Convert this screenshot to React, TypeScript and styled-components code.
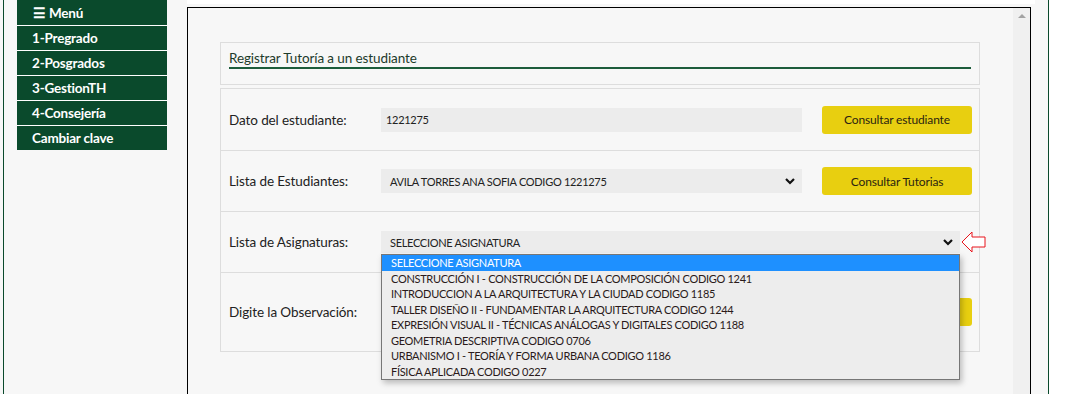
import React from "react";
import styled, { createGlobalStyle } from "styled-components";

const GlobalStyle = createGlobalStyle`
  html, body { margin: 0; padding: 0; background: #ffffff; }
  body { font-family: Lato, "Open Sans", sans-serif; color: #222; }
  * { box-sizing: border-box; }
`;

const Frame = styled.div`
  display: flex;
  width: 1049px;
  height: 394px;
  padding-left: 3px;
  background: #f7f7f7;
  overflow: hidden;
`;

const Shell = styled.div`
  flex: 1;
  display: flex;
  align-items: flex-start;
  gap: 20px;
  padding: 0 13px;
  border-left: 1px solid #0a4a2c;
  border-right: 1px solid #0a4a2c;
`;

const Sidebar = styled.nav`
  width: 150px;
  display: flex;
  flex-direction: column;
  background: #ffffff;
  gap: 1px;
`;

const MenuItem = styled.div<{ $first?: boolean }>`
  height: ${(p) => (p.$first ? 25 : 24)}px;
  display: flex;
  align-items: center;
  padding-left: ${(p) => (p.$first ? 16 : 15)}px;
  background: #0a4a2c;
  color: #ffffff;
  font-weight: 700;
  font-size: 13.5px;
  letter-spacing: -0.2px;
`;

const Main = styled.div`
  width: 848px;
  display: flex;
  flex-direction: column;
  gap: 3px;
`;

const TopStrip = styled.div`
  height: 4px;
  background: #ffffff;
`;

const Window = styled.div`
  width: 844px;
  height: 400px;
  border: 1px solid #000;
  display: flex;
  background: #f7f7f7;
`;

const Content = styled.div`
  flex: 1;
  padding: 34px 0 0 32px;
`;

const Scrollbar = styled.div`
  width: 17px;
  background: #f0f0f0;
  display: flex;
  justify-content: center;
  padding-top: 6px;
`;

const ScrollArrow = styled.div`
  width: 0;
  height: 0;
  border-left: 4px solid transparent;
  border-right: 4px solid transparent;
  border-bottom: 4px solid #a3a3a3;
`;

const HeaderBox = styled.div`
  width: 760px;
  height: 43px;
  border: 1px solid #dddddd;
  padding: 0 8px;
  display: flex;
  flex-direction: column;
  justify-content: flex-end;
`;

const Title = styled.div`
  font-size: 13.5px;
  color: #1d3b2b;
  line-height: 16px;
  padding-bottom: 1px;
  margin-bottom: 15px;
  border-bottom: 2px solid #1d5c3b;
  letter-spacing: -0.1px;
`;

const FormBox = styled.div`
  position: relative;
  width: 760px;
  margin-top: 3px;
  border: 1px solid #dddddd;
`;

const Row = styled.div<{ $h: number }>`
  display: grid;
  grid-template-columns: 132px 421px 150px;
  column-gap: 20px;
  align-items: center;
  height: ${(p) => p.$h}px;
  padding-left: 8px;
  border-top: 1px solid #dddddd;
  &:first-child { border-top: none; }
`;

const WideRow = styled(Row)`
  grid-template-columns: 152px 579px 30px;
  column-gap: 0;
`;

const Label = styled.div`
  font-size: 13.5px;
  color: #222;
  letter-spacing: -0.1px;
`;

const Field = styled.div<{ $h?: number; $pad?: number }>`
  height: ${(p) => p.$h ?? 24}px;
  background: #ececec;
  display: flex;
  align-items: center;
  justify-content: space-between;
  padding: 0 6px 0 ${(p) => p.$pad ?? 9}px;
  font-size: 11px;
  color: #222;
  letter-spacing: -0.3px;
`;

const Button = styled.div`
  height: 28px;
  background: #e8cf10;
  border-radius: 3px;
  display: flex;
  align-items: center;
  justify-content: center;
  font-size: 12px;
  color: #2b2410;
  letter-spacing: -0.15px;
`;

const Dropdown = styled.div`
  position: absolute;
  left: 160px;
  top: 165px;
  width: 579px;
  border: 1px solid #767676;
  background: #ededed;
  box-shadow: 2px 3px 6px rgba(0, 0, 0, 0.25);
`;

const Option = styled.div<{ $active?: boolean }>`
  height: 15.5px;
  line-height: 15.5px;
  padding-left: 9px;
  font-size: 11px;
  letter-spacing: -0.3px;
  white-space: nowrap;
  background: ${(p) => (p.$active ? "#1e90ff" : "transparent")};
  color: ${(p) => (p.$active ? "#ffffff" : "#2a1a1a")};
`;

const Chevron = () => (
  <svg width="12" height="8" viewBox="0 0 12 8">
    <path d="M2 2 L6 6 L10 2" fill="none" stroke="#111" strokeWidth="2.2" />
  </svg>
);

const RedArrow = () => (
  <svg width="26" height="22" viewBox="0 0 26 22" style={{ marginLeft: 1 }}>
    <path
      d="M1 11 L11 1 L11 6 L24 6 L24 16 L11 16 L11 21 Z"
      fill="#ffffff"
      stroke="#e8141c"
      strokeWidth="1"
      strokeLinejoin="miter"
    />
  </svg>
);

const options = [
  "SELECCIONE ASIGNATURA",
  "CONSTRUCCIÓN I - CONSTRUCCIÓN DE LA COMPOSICIÓN CODIGO 1241",
  "INTRODUCCION A LA ARQUITECTURA Y LA CIUDAD CODIGO 1185",
  "TALLER DISEÑO II - FUNDAMENTAR LA ARQUITECTURA CODIGO 1244",
  "EXPRESIÓN VISUAL II - TÉCNICAS ANÁLOGAS Y DIGITALES CODIGO 1188",
  "GEOMETRIA DESCRIPTIVA CODIGO 0706",
  "URBANISMO I - TEORÍA Y FORMA URBANA CODIGO 1186",
  "FÍSICA APLICADA CODIGO 0227",
];

const menu = ["☰ Menú", "1-Pregrado", "2-Posgrados", "3-GestionTH", "4-Consejería", "Cambiar clave"];

export default function App() {
  return (
    <>
      <GlobalStyle />
      <Frame>
        <Shell>
          <Sidebar>
            {menu.map((m, i) => (
              <MenuItem key={m} $first={i === 0}>
                {m}
              </MenuItem>
            ))}
          </Sidebar>
          <Main>
            <TopStrip />
            <Window>
              <Content>
                <HeaderBox>
                  <Title>Registrar Tutoría a un estudiante</Title>
                </HeaderBox>
                <FormBox>
                  <Row $h={61}>
                    <Label>Dato del estudiante:</Label>
                    <Field $pad={5}>1221275</Field>
                    <Button>Consultar estudiante</Button>
                  </Row>
                  <Row $h={61}>
                    <Label>Lista de Estudiantes:</Label>
                    <Field>
                      AVILA TORRES ANA SOFIA CODIGO 1221275
                      <Chevron />
                    </Field>
                    <Button>Consultar Tutorias</Button>
                  </Row>
                  <WideRow $h={61}>
                    <Label>Lista de Asignaturas:</Label>
                    <Field $h={22}>
                      SELECCIONE ASIGNATURA
                      <Chevron />
                    </Field>
                    <RedArrow />
                  </WideRow>
                  <Row $h={79}>
                    <Label>Digite la Observación:</Label>
                    <Field $h={60} />
                    <Button>Registrar</Button>
                  </Row>
                  <Dropdown>
                    {options.map((o, i) => (
                      <Option key={o} $active={i === 0}>
                        {o}
                      </Option>
                    ))}
                  </Dropdown>
                </FormBox>
              </Content>
              <Scrollbar>
                <ScrollArrow />
              </Scrollbar>
            </Window>
          </Main>
        </Shell>
      </Frame>
    </>
  );
}
